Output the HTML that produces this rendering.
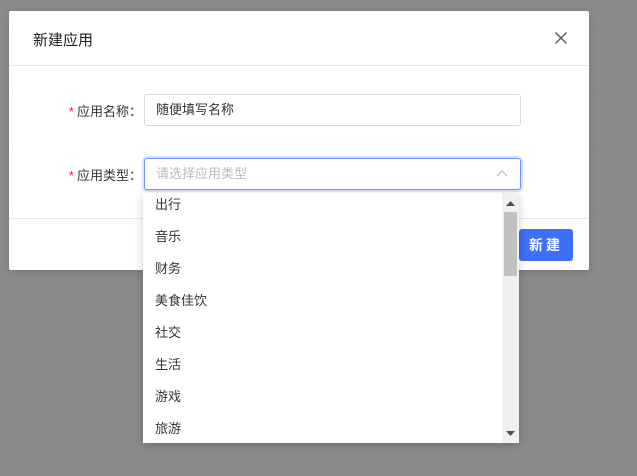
<!DOCTYPE html><html><head><style>
body{margin:0;width:637px;height:476px;background:#898a89;position:relative;overflow:hidden;font-family:"Liberation Sans","Noto Sans CJK SC",sans-serif;}
.band{position:absolute;left:0;width:637px;height:1px;background:#848584}
.modal{position:absolute;left:9px;top:11px;width:580px;height:259px;background:#fff;border-radius:2px;box-shadow:0 2px 8px rgba(0,0,0,.15)}
.title{position:absolute;left:24px;top:18px;font-size:15px;color:#222}
.x{position:absolute;left:545px;top:20px;width:14px;height:14px}
.hl{position:absolute;left:0;width:580px;height:1px;background:#e8e8e8}
.lab{position:absolute;font-size:13px;color:#333;right:447px}
.lab b{color:#f5222d;font-weight:normal;margin-right:3px}
.inp{position:absolute;left:135px;height:30px;border:1px solid #d9d9d9;border-radius:3px;font-size:13px;line-height:30px;padding-left:11px;box-sizing:content-box;width:364px}
.btn{position:absolute;left:510px;top:218px;width:54px;height:32px;background:#3e6ffb;border-radius:3px;color:#fff;font-size:14px;font-weight:bold;text-align:center;line-height:32px;letter-spacing:3px}
.dd{position:absolute;left:143px;top:193px;width:376px;height:250px;background:#fff;box-shadow:0 2px 8px rgba(0,0,0,.2);overflow:hidden}
.it{position:absolute;left:12px;font-size:13px;color:#333}
.sb{position:absolute;right:0;top:0;width:17px;height:250px;background:#f0f0f0}
</style></head><body>
<div class="band" style="top:30px"></div><div class="band" style="top:88px"></div><div class="band" style="top:150px"></div><div class="band" style="top:215px"></div>
<div class="modal">
<div class="title">新建应用</div>
<svg class="x" viewBox="0 0 14 14"><path d="M1.5 1.5L12.5 12.5M12.5 1.5L1.5 12.5" stroke="#555" stroke-width="1.4"/></svg>
<div class="hl" style="top:54px"></div>
<div class="lab" style="top:90px"><b>*</b>应用名称：</div>
<div class="inp" style="top:83px;color:#333">随便填写名称</div>
<div class="lab" style="top:154px"><b>*</b>应用类型：</div>
<div class="inp" style="top:147px;color:#bbb;border-color:#6f95f8;box-shadow:0 0 0 2px rgba(62,111,251,.2)">请选择应用类型<svg style="position:absolute;right:12px;top:10px" width="12" height="8" viewBox="0 0 12 8"><path d="M1 7L6 2L11 7" stroke="#bbb" fill="none" stroke-width="1.2"/></svg></div>
<div class="hl" style="top:207px"></div>
<div class="btn">新建</div>
</div>
<div class="dd">
<div class="it" style="top:1px">出行</div>
<div class="it" style="top:33px">音乐</div>
<div class="it" style="top:65px">财务</div>
<div class="it" style="top:97px">美食佳饮</div>
<div class="it" style="top:129px">社交</div>
<div class="it" style="top:161px">生活</div>
<div class="it" style="top:193px">游戏</div>
<div class="it" style="top:225px">旅游</div>
<div class="sb">
<svg style="position:absolute;left:4px;top:8px" width="9" height="5"><path d="M0 5L4.5 0L9 5Z" fill="#505050"/></svg>
<div style="position:absolute;left:2px;top:19px;width:13px;height:64px;background:#c1c1c1"></div>
<svg style="position:absolute;left:4px;top:238px" width="9" height="5"><path d="M0 0L4.5 5L9 0Z" fill="#505050"/></svg>
</div>
</div>
</body></html>
